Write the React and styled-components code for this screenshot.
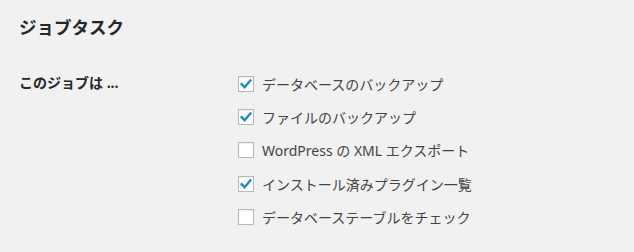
import React from 'react';
import styled, { createGlobalStyle } from 'styled-components';

const GlobalStyle = createGlobalStyle`
  html, body {
    margin: 0;
    padding: 0;
    background: #f1f1f1;
  }
  body {
    font-family: "Noto Sans", "Noto Sans CJK JP", sans-serif;
    color: #444;
  }
`;

const tasks = [
  { id: 'db', label: 'データベースのバックアップ', checked: true },
  { id: 'file', label: 'ファイルのバックアップ', checked: true },
  { id: 'wpexp', label: 'WordPress の XML エクスポート', checked: false },
  { id: 'wpplugin', label: 'インストール済みプラグイン一覧', checked: true },
  { id: 'dbcheck', label: 'データベーステーブルをチェック', checked: false },
];

const Wrap = styled.div`
  width: 634px;
  height: 252px;
  padding: 14px 0 0 19px;
  box-sizing: border-box;
`;

const Title = styled.h2`
  margin: 0;
  font-size: 17.5px;
  line-height: 26px;
  font-weight: 700;
  color: #23282d;
`;

const FormRow = styled.div`
  display: flex;
  margin-top: 31px;
`;

const RowHead = styled.div`
  width: 219px;
  flex-shrink: 0;
  font-size: 14px;
  font-weight: 700;
  line-height: 24px;
  color: #23282d;
`;

const List = styled.div`
  display: flex;
  flex-direction: column;
  margin-top: -4px;
`;

const Item = styled.label`
  display: flex;
  align-items: center;
  height: 33.33px;
  font-size: 14px;
  color: #444;
`;

const Box = styled.span`
  width: 16px;
  height: 16px;
  box-sizing: border-box;
  border: 1px solid #b4b9be;
  background: #fff;
  box-shadow: inset 0 1px 2px rgba(0, 0, 0, 0.07);
  margin-right: 8px;
  display: flex;
  align-items: center;
  justify-content: center;
`;

function Check() {
  return (
    <svg width="14" height="14" viewBox="0 0 14 14">
      <path
        d="M2.6 7.2 L5.6 10.2 L11.4 3.4"
        fill="none"
        stroke="#1e8cbe"
        strokeWidth="2.4"
        strokeLinecap="square"
      />
    </svg>
  );
}

export default function App() {
  return (
    <>
      <GlobalStyle />
      <Wrap>
        <Title>ジョブタスク</Title>
        <FormRow>
          <RowHead>このジョブは ...</RowHead>
          <List>
            {tasks.map((t) => (
              <Item key={t.id}>
                <Box>{t.checked && <Check />}</Box>
                {t.label}
              </Item>
            ))}
          </List>
        </FormRow>
      </Wrap>
    </>
  );
}
